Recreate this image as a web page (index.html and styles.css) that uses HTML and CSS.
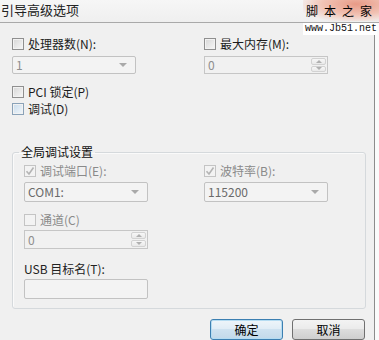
FILE: index.html
```html
<!DOCTYPE html>
<html lang="zh-CN">
<head>
    <meta charset="UTF-8">
    <title>引导高级选项</title>
    <link rel="stylesheet" href="styles.css">
</head>
<body>
    <div class="titlebar">
        <span class="title">引导高级选项</span>
    </div>

    <div class="watermark">
        <div class="wm-name">脚本之家</div>
        <div class="wm-url">www.Jb51.net</div>
    </div>

    <div class="dialog">
        <div class="top-grid">
            <div class="col">
                <label class="check"><span class="box"></span>处理器数(N):</label>
                <div class="combo"><span class="value">1</span><span class="arrow"></span></div>
            </div>
            <div class="col">
                <label class="check"><span class="box"></span>最大内存(M):</label>
                <div class="spin">
                    <span class="value">0</span>
                    <span class="spin-btns">
                        <span class="spin-btn"><span class="up"></span></span>
                        <span class="spin-btn"><span class="down"></span></span>
                    </span>
                </div>
            </div>
        </div>

        <label class="check pci"><span class="box"></span>PCI 锁定(P)</label>
        <label class="check debug"><span class="box hover"></span>调试(D)</label>

        <fieldset class="group">
            <legend>全局调试设置</legend>
            <div class="group-grid">
                <div class="col">
                    <label class="check disabled"><span class="box checked"><svg width="10" height="10" viewBox="0 0 10 10"><path d="M1.5 5.2 L4 8 L8.5 1.5" fill="none" stroke="#b4b4b4" stroke-width="1.6"/></svg></span>调试端口(E):</label>
                    <div class="combo tall"><span class="value dark">COM1:</span><span class="arrow"></span></div>
                </div>
                <div class="col">
                    <label class="check disabled"><span class="box checked"><svg width="10" height="10" viewBox="0 0 10 10"><path d="M1.5 5.2 L4 8 L8.5 1.5" fill="none" stroke="#b4b4b4" stroke-width="1.6"/></svg></span>波特率(B):</label>
                    <div class="combo tall"><span class="value dark">115200</span><span class="arrow"></span></div>
                </div>
            </div>

            <div class="group-col">
                <label class="check disabled channel"><span class="box"></span>通道(C)</label>
                <div class="spin tall">
                    <span class="value">0</span>
                    <span class="spin-btns">
                        <span class="spin-btn"><span class="up"></span></span>
                        <span class="spin-btn"><span class="down"></span></span>
                    </span>
                </div>
                <div class="field-label">USB 目标名(T):</div>
                <div class="textbox"></div>
            </div>
        </fieldset>

        <div class="buttons">
            <button class="btn default">确定</button>
            <button class="btn">取消</button>
        </div>
    </div>
</body>
</html>
```

FILE: styles.css
```css
* {
    margin: 0;
    padding: 0;
    box-sizing: border-box;
}

body {
    width: 379px;
    height: 340px;
    overflow: hidden;
    background-color: #fbfbfb;
    font-family: "Noto Sans CJK SC", "Liberation Sans", sans-serif;
    font-size: 12px;
    color: #1c1c1c;
    position: relative;
}

.titlebar {
    height: 23px;
    background: linear-gradient(#f6f6f6, #efefef);
    border-bottom: 1px solid #a9a9a9;
    padding: 1px 0 0 1px;
}

.title {
    font-size: 13px;
    line-height: 16px;
    color: #222;
}

.watermark {
    position: absolute;
    top: 0;
    right: 0;
    width: 76px;
}

.wm-name {
    height: 21px;
    padding: 4px 0 0 3px;
    font-size: 12px;
    line-height: 13px;
    letter-spacing: 6px;
    white-space: nowrap;
    color: #000;
    background: radial-gradient(ellipse at 70% 20%, #e89a86 0%, #f1c3b5 45%, rgba(246, 230, 224, 0) 80%);
}

.wm-url {
    width: 74px;
    height: 12px;
    margin-top: 2px;
    padding-left: 2px;
    background-color: #fff;
    font-family: "Liberation Mono", monospace;
    font-size: 10px;
    line-height: 12px;
    white-space: nowrap;
    color: #111;
}

.dialog {
    width: 375px;
    height: 317px;
    background-color: #f0f0f0;
    border-right: 1px solid #8c8c8c;
    padding: 15px 0 0 12px;
}

.top-grid,
.group-grid {
    display: grid;
    grid-template-columns: 192px 124px;
}

.group-grid {
    grid-template-columns: 180px 124px;
}

.col {
    display: flex;
    flex-direction: column;
}

.check {
    display: flex;
    align-items: center;
    gap: 4px;
    height: 12px;
    line-height: 12px;
    white-space: nowrap;
}

.check.disabled {
    color: #8a8a8a;
}

.box {
    width: 12px;
    height: 12px;
    flex-shrink: 0;
    border: 1px solid #8f8f8f;
    background: linear-gradient(135deg, #d6d6d6, #f7f7f7);
    box-shadow: inset 0 0 0 1px #f2f2f2;
    display: flex;
    align-items: center;
    justify-content: center;
}

.box.hover {
    border-color: #8aa2b8;
    background: linear-gradient(135deg, #c9dcec, #f2f7fb);
}

.check.disabled .box {
    border-color: #c4c4c4;
    background: #f3f3f3;
    box-shadow: none;
}

.combo,
.spin,
.textbox {
    width: 124px;
    height: 18px;
    margin-top: 6px;
    border: 1px solid #c2c2c2;
    border-radius: 2px;
    background-color: #f3f3f3;
    display: flex;
    align-items: center;
    justify-content: space-between;
}

.combo.tall {
    height: 20px;
    margin-top: 5px;
}

.value {
    padding-left: 3px;
    color: #8e8e8e;
    line-height: 12px;
}

.value.dark {
    color: #6a6a6a;
}

.arrow {
    width: 0;
    height: 0;
    margin-right: 8px;
    border-left: 4px solid transparent;
    border-right: 4px solid transparent;
    border-top: 4px solid #a9a9a9;
}

.spin {
    border-radius: 0;
    border-color: #c6c6c6;
    background-color: #f1f1f1;
    align-items: stretch;
}

.spin .value {
    align-self: center;
}

.spin-btns {
    width: 15px;
    margin: 1px;
    display: flex;
    flex-direction: column;
    gap: 1px;
}

.spin-btn {
    flex: 1;
    border: 1px solid #d2d2d2;
    border-radius: 2px;
    background: linear-gradient(#f7f7f7, #e9e9e9);
    display: flex;
    align-items: center;
    justify-content: center;
}

.up,
.down {
    width: 0;
    height: 0;
    border-left: 3px solid transparent;
    border-right: 3px solid transparent;
}

.up {
    border-bottom: 3px solid #b0b0b0;
}

.down {
    border-top: 3px solid #b0b0b0;
}

.pci {
    margin-top: 12px;
}

.debug {
    margin-top: 5px;
}

.group {
    width: 354px;
    height: 164px;
    margin-top: 30px;
    border: 1px solid #d5d9dc;
    border-radius: 3px;
    box-shadow: inset 1px 1px 0 #fafafa;
    padding: 6px 11px 0 11px;
}

.group legend {
    margin-left: -5px;
    padding: 0 2px;
    font-size: 12px;
    line-height: 14px;
    color: #111;
}

.group-col {
    display: flex;
    flex-direction: column;
}

.channel {
    margin-top: 12px;
}

.spin.tall {
    height: 19px;
    margin-top: 4px;
}

.field-label {
    margin-top: 14px;
    height: 12px;
    line-height: 12px;
    color: #222;
}

.textbox {
    height: 20px;
    margin-top: 4px;
    border-radius: 2px;
}

.buttons {
    display: flex;
    justify-content: flex-end;
    gap: 9px;
    margin-top: 10px;
    padding-right: 9px;
}

.btn {
    width: 73px;
    height: 21px;
    border: 1px solid #707070;
    border-radius: 3px;
    background: linear-gradient(#f3f3f3 0%, #ebebeb 45%, #dddddd 50%, #cfcfcf 100%);
    font-family: "Noto Sans CJK SC", sans-serif;
    font-size: 12px;
    line-height: 12px;
    color: #000;
}

.btn.default {
    border-color: #3c7fb1;
    box-shadow: inset 0 0 0 1px #b5dcf2;
    background: linear-gradient(#eef5fa 0%, #e1edf6 45%, #cfe2f0 50%, #c2d9ea 100%);
}
```
